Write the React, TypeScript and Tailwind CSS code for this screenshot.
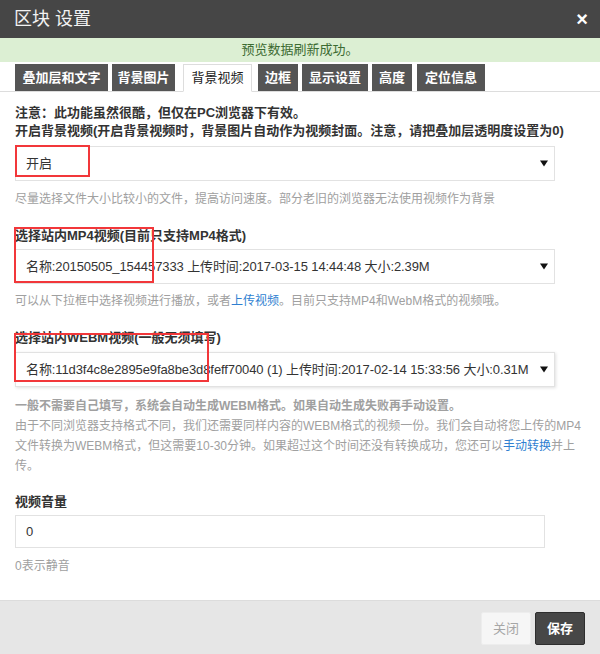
import React from "react";

const font = "font-['Liberation_Sans','Noto_Sans_CJK_SC',sans-serif]";

const tabs = [
  { label: "叠加层和文字", className: "ml-[15px] w-[93px]" },
  { label: "背景图片", className: "ml-[4px] w-[63px]" },
  { label: "背景视频", className: "ml-[8px] w-[69px]", active: true },
  { label: "边框", className: "ml-[6px] w-[40px]" },
  { label: "显示设置", className: "ml-[4px] w-[66px]" },
  { label: "高度", className: "ml-[4px] w-[40px]" },
  { label: "定位信息", className: "ml-[5px] w-[68px]" },
];

function Arrow() {
  return (
    <svg width="8" height="7" viewBox="0 0 8 7" className="shrink-0">
      <path d="M0 0.5 L8 0.5 L4 6.5 Z" fill="#111" />
    </svg>
  );
}

function FakeSelect({ value }: { value: string }) {
  return (
    <div className="w-[540px] h-[35px] border border-[#e2e2e2] bg-white flex items-center justify-between pl-[10px] pr-[6px] text-[13px] tracking-[-0.1px] text-[#333] whitespace-nowrap">
      <span>{value}</span>
      <Arrow />
    </div>
  );
}

function RedMark({ className }: { className: string }) {
  return <div className={"absolute border-2 border-[#f2373a] pointer-events-none " + className} />;
}

export default function App() {
  return (
    <div className={`w-[600px] h-[654px] bg-white flex flex-col ${font}`}>
      {/* header */}
      <div className="h-[38px] bg-[#464646] flex items-center justify-between pl-[14px] pr-[12px] shrink-0">
        <span className="text-[18px] text-[#f2f2f2]">区块 设置</span>
        <span className="text-[20px] font-bold text-white leading-none">×</span>
      </div>
      <div className="h-[24px] bg-[#dcefd3] flex items-center justify-center text-[13px] text-[#3c6b32] shrink-0">
        预览数据刷新成功。
      </div>

      {/* tabs */}
      <div className="mt-[2px] h-[28px] flex items-stretch border-b border-[#dddddd] shrink-0">
        {tabs.map((t) => (
          <div
            key={t.label}
            className={
              t.className +
              " flex items-center justify-center text-[13px] " +
              (t.active
                ? "bg-white text-[#222] border border-[#dddddd] border-b-white -mb-px"
                : "bg-[#555555] text-white font-bold")
            }
          >
            {t.label}
          </div>
        ))}
      </div>

      {/* body */}
      <div className="px-[15px] flex flex-col">
        <div className="pt-[12px] text-[13px] leading-[18px] font-bold text-[#333] whitespace-nowrap">
          <p>注意：此功能虽然很酷，但仅在PC浏览器下有效。</p>
          <p>开启背景视频(开启背景视频时，背景图片自动作为视频封面。注意，请把叠加层透明度设置为0)</p>
        </div>
        <div className="relative mt-[6px]">
          <FakeSelect value="开启" />
          <RedMark className="-top-px left-0 w-[75px] h-[32px]" />
        </div>
        <p className="mt-[9px] text-[12px] leading-[18px] text-[#a0a0a0]">
          尽量选择文件大小比较小的文件，提高访问速度。部分老旧的浏览器无法使用视频作为背景
        </p>

        <div className="relative">
          <p className="mt-[19px] text-[13px] leading-[18px] font-bold text-[#333]">
            选择站内MP4视频(目前只支持MP4格式)
          </p>
          <div className="mt-[4px]">
            <FakeSelect value="名称:20150505_154457333 上传时间:2017-03-15 14:44:48 大小:2.39M" />
          </div>
          <RedMark className="top-[19px] -left-px w-[140px] h-[56px]" />
        </div>
        <p className="mt-[8px] text-[12px] leading-[18px] text-[#a0a0a0]">
          可以从下拉框中选择视频进行播放，或者<span className="text-[#2f7fd1]">上传视频</span>。目前只支持MP4和WebM格式的视频哦。
        </p>

        <div className="relative">
          <p className="mt-[19px] text-[13px] leading-[18px] font-bold text-[#333]">
            选择站内WEBM视频(一般无须填写)
          </p>
          <div className="mt-[5px] shadow-[1px_1px_3px_rgba(0,0,0,0.12)] w-[540px]">
            <FakeSelect value="名称:11d3f4c8e2895e9fa8be3d8feff70040 (1) 上传时间:2017-02-14 15:33:56 大小:0.31M" />
          </div>
          <RedMark className="top-[23px] -left-px w-[195px] h-[49px]" />
        </div>
        <div className="mt-[9px] text-[12px] leading-[20px] text-[#a0a0a0]">
          <p className="font-bold">一般不需要自己填写，系统会自动生成WEBM格式。如果自动生成失败再手动设置。</p>
          <p>
            由于不同浏览器支持格式不同，我们还需要同样内容的WEBM格式的视频一份。我们会自动将您上传的MP4
            <br />
            文件转换为WEBM格式，但这需要10-30分钟。如果超过这个时间还没有转换成功，您还可以<span className="text-[#2f7fd1]">手动转换</span>并上
            <br />
            传。
          </p>
        </div>

        <p className="mt-[17px] text-[13px] leading-[18px] font-bold text-[#333]">视频音量</p>
        <div className="mt-[4px] w-[530px] h-[33px] border border-[#e2e2e2] flex items-center pl-[10px] text-[13px] text-[#333]">
          0
        </div>
        <p className="mt-[9px] text-[12px] leading-[18px] text-[#a0a0a0]">0表示静音</p>
      </div>

      {/* footer */}
      <div className="mt-auto h-[54px] bg-[#e6e6e6] border-t border-[#dcdcdc] flex items-start justify-end gap-[4px] pt-[11px] pr-[15px] shrink-0">
        <button className="w-[50px] h-[33px] bg-[#f6f6f6] border border-[#ededed] rounded-[2px] text-[13px] text-[#a6a6a6]">
          关闭
        </button>
        <button className="w-[50px] h-[33px] bg-[#474747] border border-[#2e2e2e] rounded-[2px] text-[13px] font-bold text-white">
          保存
        </button>
      </div>
    </div>
  );
}
